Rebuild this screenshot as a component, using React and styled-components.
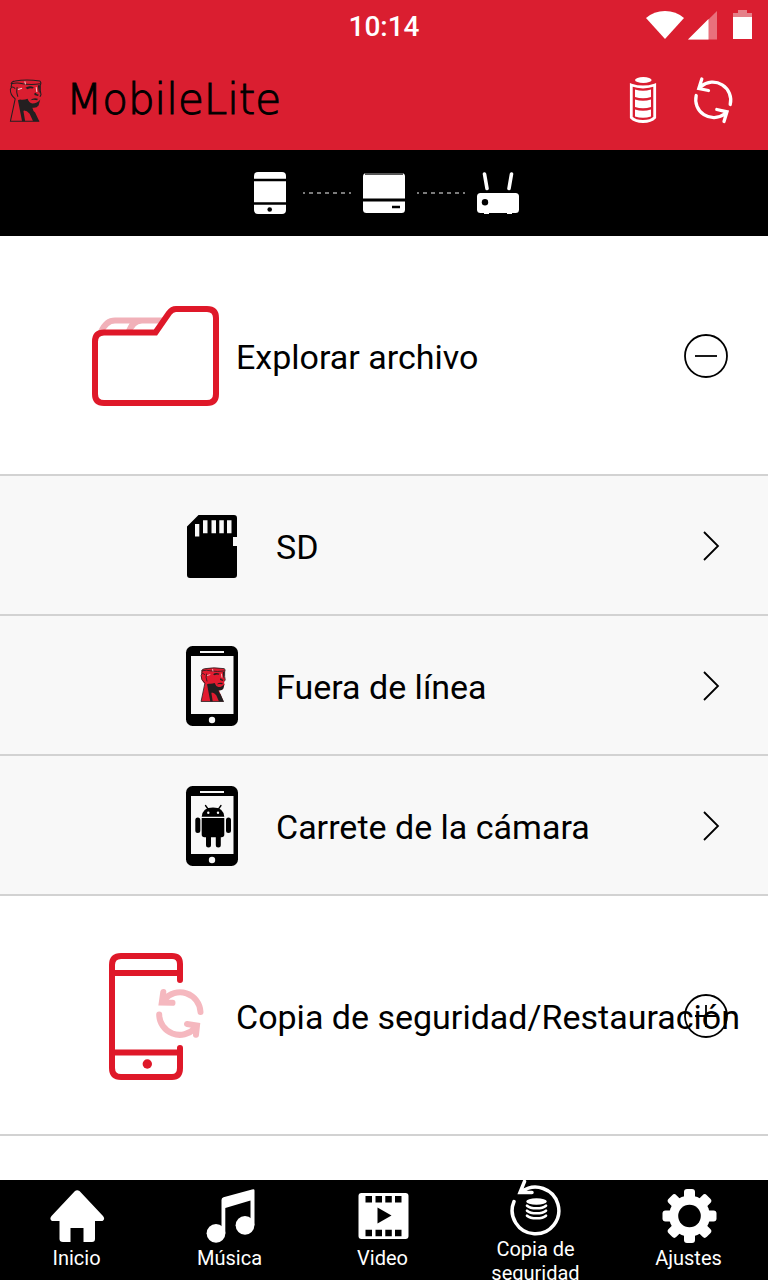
import React from 'react';
import styled, { createGlobalStyle } from 'styled-components';

const GlobalStyle = createGlobalStyle`
  * { box-sizing: border-box; }
  body {
    margin: 0;
    background: #fff;
    color: #000;
    font-family: Roboto, 'Liberation Sans', sans-serif;
  }
  button {
    margin: 0;
    padding: 0;
    border: 0;
    background: none;
    color: inherit;
    font: inherit;
    cursor: pointer;
  }
  svg { display: block; overflow: visible; flex: none; }
`;

const Screen = styled.div`
  display: flex;
  flex-direction: column;
  height: 100vh;
  overflow: hidden;
`;

const StatusBar = styled.div`
  display: grid;
  grid-template-columns: 1fr auto 1fr;
  align-items: center;
  flex: none;
  height: 50px;
  padding: 0 16px;
  background: #da1e30;
  color: #fff;
`;

const Clock = styled.time`
  grid-column: 2;
  font-size: 28px;
  line-height: 34px;
  font-weight: 500;
  padding-top: 4px;
`;

const StatusIcons = styled.div`
  display: flex;
  justify-content: flex-end;
  align-items: center;
  gap: 4px;
  svg:last-child { margin-left: 12px; }
`;

const Header = styled.header`
  display: flex;
  align-items: center;
  justify-content: space-between;
  flex: none;
  height: 100px;
  padding: 0 31px 0 9px;
  background: #da1e30;
  color: #fff;
`;

const Brand = styled.h1`
  display: flex;
  align-items: center;
  gap: 24px;
  margin: 0;
  color: #000;
  font-family: 'DejaVu Sans', sans-serif;
  font-size: 42px;
  line-height: 48px;
  font-weight: 200;
  -webkit-text-stroke: 1px #000;
`;

const HeaderActions = styled.div`
  display: flex;
  gap: 22px;
`;

const IconButton = styled.button`
  display: grid;
  place-items: center;
  width: 48px;
  height: 48px;
`;

const ConnectionBar = styled.div`
  display: flex;
  align-items: center;
  justify-content: center;
  gap: 11px;
  flex: none;
  height: 86px;
  background: #000;
`;

const Content = styled.main`
  flex: 1;
  min-height: 0;
  overflow: hidden;
`;

const Section = styled.section`
  display: flex;
  align-items: center;
  height: 240px;
  padding: 2px 40px 0 76px;
  border-bottom: 2px solid #d2d2d2;
`;

const Art = styled.span`
  display: flex;
  justify-content: center;
  flex: none;
  width: ${(p) => p.$width}px;
`;

const Title = styled.h2`
  flex: 1;
  min-width: 0;
  margin: 0;
  padding-top: 2px;
  font-size: 34px;
  line-height: 42px;
  font-weight: 400;
  white-space: nowrap;
`;

const Toggle = styled.button`
  flex: none;
  width: 44px;
  height: 44px;
  border-radius: 50%;
`;

const List = styled.ul`
  margin: 0;
  padding: 0;
  list-style: none;
`;

const Row = styled.a`
  display: flex;
  align-items: center;
  height: 140px;
  padding: 2px 49px 0 148px;
  border-bottom: 2px solid #d2d2d2;
  background: #f8f8f8;
  color: #000;
  text-decoration: none;
`;

const RowLabel = styled.span`
  flex: 1;
  padding-top: 2px;
  font-size: 34px;
  line-height: 42px;
`;

const TabBar = styled.nav`
  display: flex;
  flex: none;
  height: 100px;
  padding-right: 3px;
  overflow: hidden;
  background: #000;
`;

const Tab = styled.a`
  display: flex;
  flex: 1 1 0;
  flex-direction: column;
  align-items: center;
  min-width: 0;
  padding-top: ${(p) => (p.$twoLines ? 1 : 10)}px;
  color: #fff;
  font-size: 20px;
  line-height: 24px;
  text-align: center;
  text-decoration: none;
`;

const Head = ({ width, height, fill = 'none' }) => (
  <svg width={width} height={height} viewBox="0 0 96 126" preserveAspectRatio="none" aria-hidden="true">
    <path d="M6 14Q6 7 18 6Q50 0 90 6Q94 9 91 20L90 34L93 46L89 52L90 62L84 80L70 84L87 124H4L18 60Q4 50 4 34Z" fill={fill} />
    <g fill="none" stroke="#231f20" strokeWidth="3" strokeLinejoin="round">
      <path d="M6 14Q8 7 18 6Q50 0 90 6Q95 10 91 18V34L93 46L90 52" />
      <path d="M6 14Q24 9 40 14Q64 18 91 14" />
      <path d="M8 14L6 24M18 28Q8 18 4 30Q3 46 18 58L4 124H88" />
      <path d="M24 24Q20 36 26 52" />
    </g>
    <g fill="#231f20">
      <path d="M32 60Q44 62 54 58Q58 70 68 72Q82 72 91 60L86 78Q80 86 68 84Q70 94 76 98L88 124H70L60 102Q52 92 44 92L42 94L47 124H38L26 62Z" />
      <path d="M62 62Q72 54 84 58L82 62Q72 60 62 62Z" />
      <path d="M48 26Q58 18 72 24L69 28Q60 25 54 30Z" />
      <path d="M74 42Q79 38 80 44L87 46L84 50L74 47Z" />
      <path d="M84 18L90 18L89 42L86 36Z" />
    </g>
    <path d="M26 31L38 27M46 7L48 16M79 24L81 38" stroke="#f9c9cd" strokeWidth="3" />
  </svg>
);

const Wifi = () => (
  <svg width="38" height="30" viewBox="0 0 38 30" aria-hidden="true">
    <path d="M0 8Q8 1 19 1T38 8L19 29Z" fill="#fff" />
  </svg>
);

const Signal = () => (
  <svg width="29" height="30" viewBox="0 0 29 30" aria-hidden="true">
    <path d="M0 29.500L29 1V29.500Z" fill="#e9707c" />
    <path d="M0 29.500L20.500 9V29.500Z" fill="#fff" />
  </svg>
);

const StatusBattery = () => (
  <svg width="19" height="30" viewBox="0 0 19 30" aria-hidden="true">
    <path d="M0 3H5V0H14V3H19V8H0Z" fill="#e58089" />
    <path d="M0 7H19V29H0Z" fill="#fff" />
  </svg>
);

const Battery = () => (
  <svg width="28" height="48" viewBox="0 0 28 48" fill="#fff" aria-hidden="true">
    <ellipse cx="14.300" cy="4" rx="8.300" ry="3" />
    <path d="M2.300 9Q14 13 25.700 9V41.500Q22 45.500 14 45.500T2.300 41.500Z" fill="none" stroke="#fff" strokeWidth="2.800" />
    <path d="M6 13.500Q14 16 22 13.500V21Q14 23.500 6 21ZM6 23.500Q14 26 22 23.500V31Q14 33.500 6 31ZM6 33.500Q14 36 22 33.500V40.500Q14 43 6 40.500Z" />
  </svg>
);

const Sync = () => (
  <svg width="48" height="48" viewBox="0 0 48 48" fill="none" stroke="#fff" strokeWidth="3.300" strokeLinecap="round" strokeLinejoin="miter" aria-hidden="true">
    <path d="M41.200 28.500A18 18 0 0 0 12 10.500M12.800 3L9.800 12.500L19.500 14.500" />
    <path d="M7.200 19.500A18 18 0 0 0 35.500 38M27.800 33.500L38 35.800L35 45.500" />
  </svg>
);

const PhoneNode = () => (
  <svg width="44" height="44" viewBox="0 0 44 44" aria-label="Teléfono">
    <rect x="6" y="1" width="32" height="42" rx="4" fill="#fff" />
    <path d="M6 9H38M6 32.500H38" stroke="#000" strokeWidth="2.400" />
    <circle cx="21.700" cy="38.500" r="2.300" />
  </svg>
);

const DriveNode = () => (
  <svg width="44" height="44" viewBox="0 0 44 44" aria-label="MobileLite">
    <rect x="1" y="2" width="42" height="40" rx="3.500" fill="#fff" />
    <path d="M3 3H41" stroke="#555" strokeWidth="2" />
    <path d="M1 29H43" stroke="#000" strokeWidth="3" />
    <path d="M30 36H38" stroke="#000" strokeWidth="2.500" />
  </svg>
);

const RouterNode = () => (
  <svg width="44" height="44" viewBox="0 0 44 44" aria-label="Router">
    <path d="M8.500 3L11 17.500M35.500 3L33 17.500" stroke="#fff" strokeWidth="3.600" strokeLinecap="round" />
    <rect x="1" y="22" width="42" height="20" rx="3.500" fill="#fff" />
    <path d="M8 41H13V43H8ZM31 41H36V43H31Z" fill="#fff" />
    <circle cx="9" cy="31.300" r="3.200" />
  </svg>
);

const DashLink = () => (
  <svg width="48" height="2" viewBox="0 0 48 2" aria-hidden="true">
    <path d="M0 1H48" stroke="#7b7b7b" strokeWidth="2" strokeDasharray="4 4" strokeDashoffset="2" />
  </svg>
);

const Folder = () => (
  <svg width="128" height="100" viewBox="0 0 128 100" fill="none" strokeWidth="6" aria-hidden="true">
    <path d="M9 26Q14 14.500 23 14.500H73M36 28Q40 14.500 50 14.500" stroke="#f1b1b9" />
    <path d="M12 26.500H63.500L77 7Q80 3 84 3H115Q124 3 124 12V88Q124 97 115 97H12Q3 97 3 88V35.500Q3 26.500 12 26.500Z" stroke="#df1829" />
  </svg>
);

const PhoneBackup = () => (
  <svg width="94" height="127" viewBox="0 0 94 127" fill="none" stroke="#df1829" strokeWidth="6" strokeLinecap="round" aria-hidden="true">
    <path d="M71 27V11Q71 3 63 3H12Q3 3 3 12V115Q3 124 12 124H63Q71 124 71 115V95M3 20H71M3 99.500H71" />
    <circle cx="38.300" cy="111" r="4.700" fill="#df1829" stroke="none" />
    <g stroke="#f5b8bf">
      <path d="M91.500 59A20.500 20.500 0 0 0 55 47M54.300 39L52.800 49.500L63.500 49.800" />
      <path d="M50.200 61.500A20.500 20.500 0 0 0 86 75M78 71L88 72.500L87 81.800" />
    </g>
  </svg>
);

const SdCard = () => (
  <svg width="52" height="62" viewBox="0 0 52 62" aria-hidden="true">
    <path d="M1 11.500L12.500 0H48Q51 0 51 3V22H47V31H51V60Q51 63 48 63H4Q1 63 1 60Z" />
    <path d="M9 9H13.300V21.500H9ZM17 5.300H21.500V18.300H17ZM25.500 5.300H30V18.300H25.500ZM33.300 5.300H37.800V18.300H33.300ZM41 5.300H45.500V18.300H41Z" fill="#f8f8f8" />
  </svg>
);

const PhoneFrame = ({ children }) => (
  <svg width="52" height="80" viewBox="0 0 52 80" aria-hidden="true">
    <rect width="52" height="80" rx="6.500" />
    <path d="M5 10H47.500V68H5ZM14 5H38V7H14Z" fill="#f8f8f8" />
    <circle cx="26" cy="74" r="3.200" fill="#f8f8f8" />
    {children}
  </svg>
);

const OfflinePhone = () => (
  <PhoneFrame>
    <g transform="translate(14 21)">
      <Head width={26} height={35} fill="#e31b2f" />
    </g>
  </PhoneFrame>
);

const CameraPhone = () => (
  <PhoneFrame>
    <path d="M15.700 30.700Q16.500 21.500 27 21.500T38.300 30.700ZM15.700 32H38.300V48.500Q38.300 51.300 35.500 51.300H18.500Q15.700 51.300 15.700 48.500Z" />
    <path d="M11.800 34V44.500M42.500 34V44.500M22.500 50V59M32.300 50V59" stroke="#000" strokeWidth="5" strokeLinecap="round" />
    <path d="M19.500 19.500L22 23M35 19.500L32.500 23" stroke="#000" strokeWidth="1.300" strokeLinecap="round" />
    <circle cx="22.300" cy="26.700" r="1.200" fill="#f8f8f8" />
    <circle cx="32" cy="26.700" r="1.200" fill="#f8f8f8" />
  </PhoneFrame>
);

const ToggleMark = ({ open }) => (
  <svg width="44" height="44" viewBox="0 0 44 44" fill="none" stroke="#000" strokeWidth="1.800" aria-hidden="true">
    <circle cx="22" cy="22" r="21" />
    <path d={open ? 'M11 22H33' : 'M11 22H33M22 11V33'} />
  </svg>
);

const Chevron = () => (
  <svg width="16" height="28" viewBox="0 0 16 28" fill="none" stroke="#000" strokeWidth="1.800" aria-hidden="true">
    <path d="M1 0L15 14L1 28" />
  </svg>
);

const TabIcon = ({ children }) => (
  <svg width="56" height="56" viewBox="0 0 56 56" fill="#fff" aria-hidden="true">
    {children}
  </svg>
);

const HomeIcon = () => (
  <TabIcon>
    <path d="M26 1Q28 -0.500 30.500 1L54 26Q56.500 29 53.500 31H46V49Q46 52 43 52H34.500V38H21.500V52H14Q10.500 52 10.500 49V31H3Q0 29 2.500 26Z" />
  </TabIcon>
);

const MusicIcon = () => (
  <TabIcon>
    <path d="M19.500 10Q19.500 8 21.500 7.300L50 -0.500Q52.500 -1.500 52.500 0.500V35H48.500V10.500L23.300 18V43H19.500Z" />
    <circle cx="14" cy="43.300" r="9.400" />
    <circle cx="43" cy="35.300" r="9.400" />
  </TabIcon>
);

const VideoIcon = () => (
  <TabIcon>
    <rect x="3.500" y="3" width="50" height="46" rx="3" />
    <path d="M10.500 6H17V12.500H10.500ZM20.500 6H27V12.500H20.500ZM30.300 6H36.800V12.500H30.300ZM40 6H46.500V12.500H40ZM10.500 39.700H17V46.200H10.500ZM20.500 39.700H27V46.200H20.500ZM30.300 39.700H36.800V46.200H30.300ZM40 39.700H46.500V46.200H40ZM22.500 17.500L36.500 25.500L22.500 33.500Z" fill="#000" />
  </TabIcon>
);

const BackupIcon = () => (
  <TabIcon>
    <g fill="none" stroke="#fff" strokeWidth="3.500" strokeLinecap="round">
      <path d="M6 20.500A23.300 23.300 0 1 0 14 10.500M16.500 0.500L12 11.500H24" />
    </g>
    <ellipse cx="28.500" cy="20.500" rx="10.300" ry="3.200" />
    <path d="M19 24.700Q22 27.300 28.500 27.300T38 24.700M19 29.700Q22 32.300 28.500 32.300T38 29.700M19 34.700Q22 37.300 28.500 37.300T38 34.700" fill="none" stroke="#fff" strokeWidth="2.600" strokeLinecap="round" />
  </TabIcon>
);

const GearIcon = () => (
  <TabIcon>
    {[0, 45, 90, 135].map((angle) => (
      <rect key={angle} x="23" y="-1" width="11" height="54" rx="3" transform={`rotate(${angle} 28.500 26)`} />
    ))}
    <circle cx="28.500" cy="26" r="20.500" />
    <circle cx="28.500" cy="26" r="11.300" fill="#000" />
  </TabIcon>
);

const sources = [
  { label: 'SD', Icon: SdCard },
  { label: 'Fuera de línea', Icon: OfflinePhone },
  { label: 'Carrete de la cámara', Icon: CameraPhone },
];

const tabs = [
  { label: 'Inicio', Icon: HomeIcon },
  { label: 'Música', Icon: MusicIcon },
  { label: 'Video', Icon: VideoIcon },
  { label: 'Copia de seguridad', Icon: BackupIcon, twoLines: true },
  { label: 'Ajustes', Icon: GearIcon },
];

export default function App() {
  return (
    <Screen>
      <GlobalStyle />
      <StatusBar>
        <Clock>10:14</Clock>
        <StatusIcons>
          <Wifi />
          <Signal />
          <StatusBattery />
        </StatusIcons>
      </StatusBar>
      <Header>
        <Brand>
          <Head width={33} height={43} />
          MobileLite
        </Brand>
        <HeaderActions>
          <IconButton type="button" aria-label="Batería"><Battery /></IconButton>
          <IconButton type="button" aria-label="Actualizar"><Sync /></IconButton>
        </HeaderActions>
      </Header>
      <ConnectionBar>
        <PhoneNode />
        <DashLink />
        <DriveNode />
        <DashLink />
        <RouterNode />
      </ConnectionBar>
      <Content>
        <Section>
          <Art $width={160}><Folder /></Art>
          <Title>Explorar archivo</Title>
          <Toggle type="button" aria-label="Contraer" aria-expanded="true"><ToggleMark open /></Toggle>
        </Section>
        <List>
          {sources.map(({ label, Icon }) => (
            <li key={label}>
              <Row href="#">
                <Art $width={128}><Icon /></Art>
                <RowLabel>{label}</RowLabel>
                <Chevron />
              </Row>
            </li>
          ))}
        </List>
        <Section>
          <Art $width={160}><PhoneBackup /></Art>
          <Title>Copia de seguridad/Restauración</Title>
          <Toggle type="button" aria-label="Expandir" aria-expanded="false"><ToggleMark /></Toggle>
        </Section>
      </Content>
      <TabBar>
        {tabs.map(({ label, Icon, twoLines }) => (
          <Tab key={label} href="#" $twoLines={twoLines}>
            <Icon />
            {label}
          </Tab>
        ))}
      </TabBar>
    </Screen>
  );
}
